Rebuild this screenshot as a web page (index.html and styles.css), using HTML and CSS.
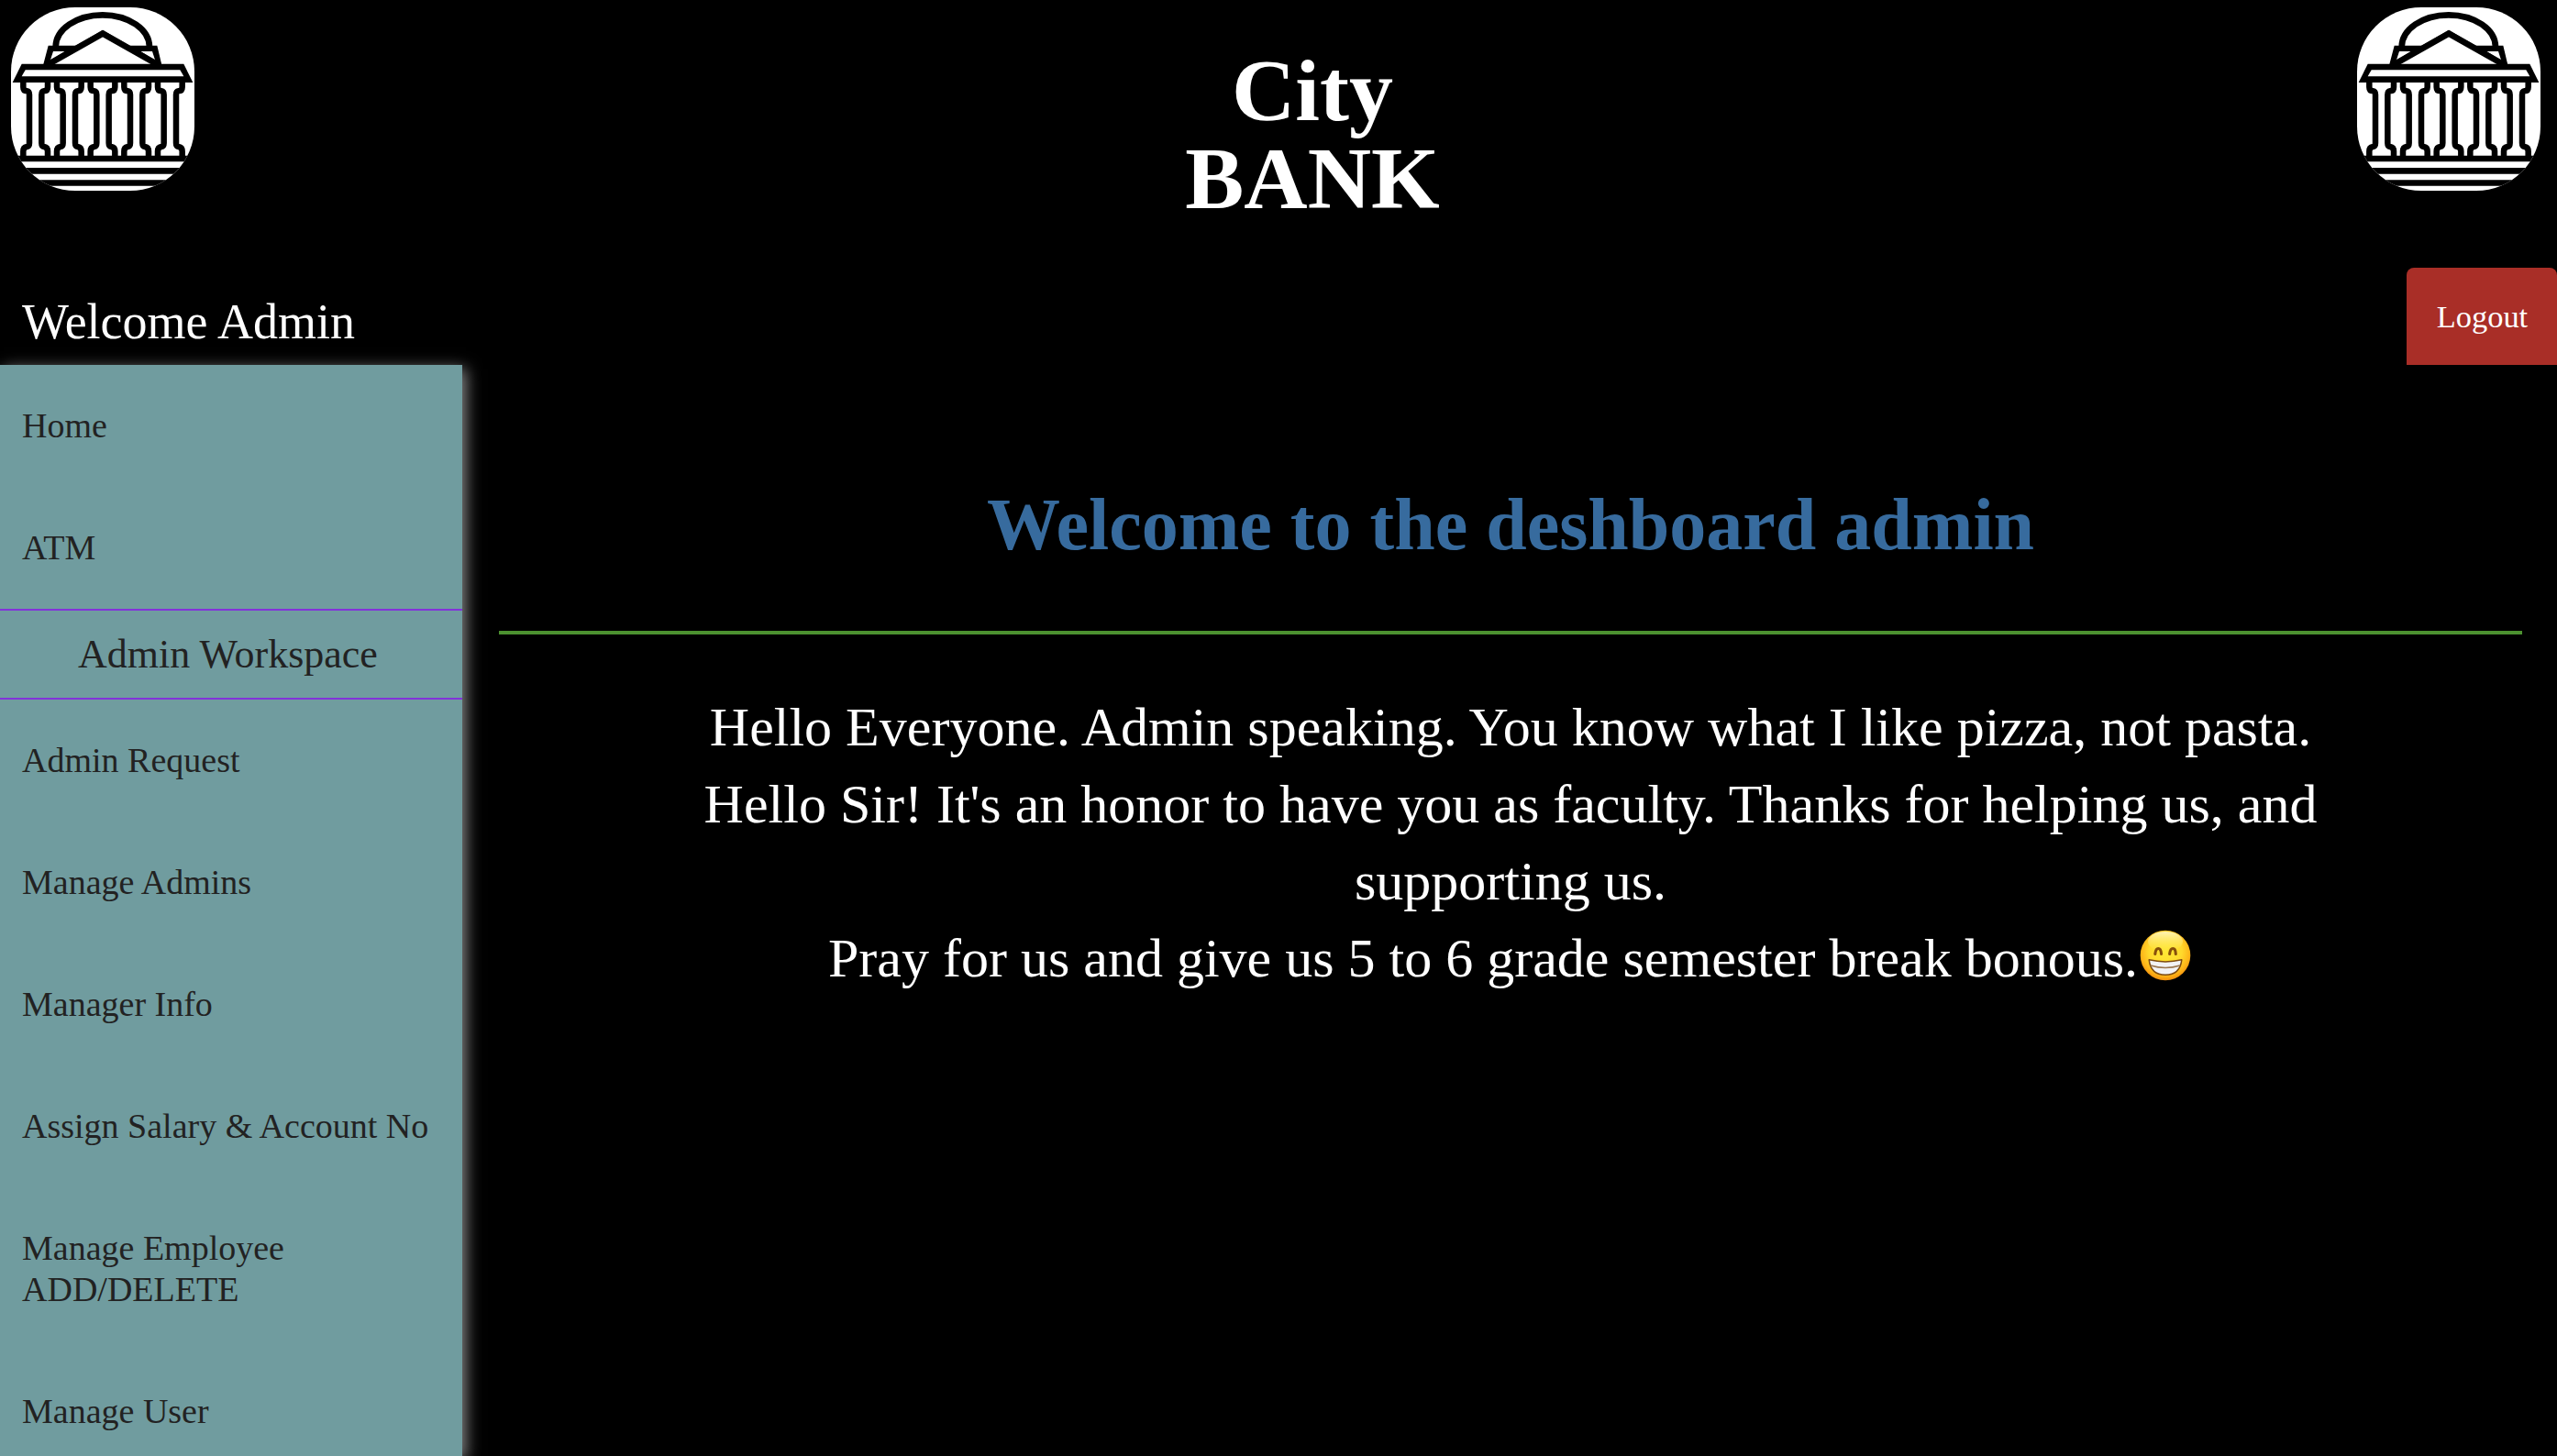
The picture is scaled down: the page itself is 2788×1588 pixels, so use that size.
FILE: index.html
```html
<!DOCTYPE html>
<html lang="en">
<head>
<meta charset="utf-8">
<title>City Bank</title>
<link rel="stylesheet" href="styles.css">
</head>
<body>
<svg class="defs" aria-hidden="true">
  <defs>
    <g id="column" fill="none" stroke="#000" stroke-width="19.5">
      <path d="M-40 262V285Q-40 298 -28 298Q-20 299 -20 310V468Q-20 479 -28 480Q-40 482 -40 495V515"/>
      <path d="M40 262V285Q40 298 28 298Q20 299 20 310V468Q20 479 28 480Q40 482 40 495V515"/>
    </g>
    <symbol id="bank" viewBox="36 24 600 600">
      <rect x="36" y="24" width="600" height="600" fill="#fff"/>
      <path d="M182 154A153.500 105 0 0 1 489 154" fill="none" stroke="#000" stroke-width="20"/>
      <path fill-rule="evenodd" d="M158 149H514L532 225H138ZM174 168L164 199L212 168ZM498 168L508 199L460 168ZM248 149L336 98L424 149Z"/>
      <path d="M248 150L336 100L424 150Z" fill="#fff"/>
      <path d="M150 215L336 110L522 215" fill="#fff" stroke="#000" stroke-width="20"/>
      <path d="M41 270L71 209H601L631 270Z"/>
      <path d="M71 250L83 229H589L601 250Z" fill="#fff"/>
      <use href="#column" x="116"/><use href="#column" x="226"/><use href="#column" x="336"/><use href="#column" x="446"/><use href="#column" x="556"/>
      <path d="M36 509.500H636V529H36ZM36 549H636V569H36ZM36 589H636V608H36Z"/>
    </symbol>
  </defs>
</svg>
<header class="header">
  <svg class="logo"><use href="#bank"/></svg>
  <h1 class="brand">City<br>BANK</h1>
  <svg class="logo"><use href="#bank"/></svg>
</header>
<div class="topbar">
  <span class="greeting">Welcome Admin</span>
  <a class="logout">Logout</a>
</div>
<div class="layout">
  <nav class="sidebar">
    <a class="item">Home</a>
    <a class="item">ATM</a>
    <div class="section">Admin Workspace</div>
    <a class="item">Admin Request</a>
    <a class="item">Manage Admins</a>
    <a class="item">Manager Info</a>
    <a class="item">Assign Salary &amp; Account No</a>
    <a class="item">Manage Employee ADD/DELETE</a>
    <a class="item last">Manage User</a>
  </nav>
  <main class="content">
    <h2 class="title">Welcome to the deshboard admin</h2>
    <p class="message">Hello Everyone. Admin speaking. You know what I like pizza, not pasta.<br>Hello Sir! It's an honor to have you as faculty. Thanks for helping us, and<br>supporting us.<br>Pray for us and give us 5 to 6 grade semester break bonous.<svg class="emoji" viewBox="0 0 60 60" role="img" aria-label="Grinning face">
      <defs>
        <radialGradient id="face" cx=".5" cy=".42" r=".6">
          <stop offset="0" stop-color="#ffe835"/><stop offset=".55" stop-color="#ffd92c"/><stop offset=".82" stop-color="#fdb318"/><stop offset="1" stop-color="#ee8509"/>
        </radialGradient>
        <linearGradient id="shine" x1="0" y1="0" x2="0" y2="1">
          <stop offset="0" stop-color="#fffbd0" stop-opacity=".85"/><stop offset="1" stop-color="#fff06a" stop-opacity="0"/>
        </linearGradient>
      </defs>
      <circle cx="30" cy="30" r="27.300" fill="url(#face)"/>
      <ellipse cx="30" cy="15" rx="19" ry="11" fill="url(#shine)"/>
      <path d="M18.800 28.500Q19.500 22.500 22.300 22.500T25.600 28.500M34.600 28.500Q35.300 22.500 38.200 22.500T41.300 28.500" fill="none" stroke="#87500b" stroke-width="3.100" stroke-linecap="round"/>
      <path d="M12.200 34.800Q30 39 47.800 34.800Q46 51.200 30 51.200Q14 51.200 12.200 34.800Z" fill="#f2f2f5" stroke="#7d4a10" stroke-width="1.500" stroke-linejoin="round"/>
      <path d="M14 41Q30 46 46 41" fill="none" stroke="#9a7650" stroke-width="1.600"/>
    </svg></p>
  </main>
</div>
</body>
</html>
```
FILE: styles.css
```css
* { box-sizing: border-box; }

body {
  margin: 0;
  height: 1588px;
  overflow: hidden;
  display: flex;
  flex-direction: column;
  background: #000;
  color: #fff;
  font-family: "Liberation Serif", "Times New Roman", serif;
}

.defs { position: absolute; width: 0; height: 0; }

.header {
  display: grid;
  grid-template-columns: 200px 1fr 200px;
  height: 292px;
  flex: none;
  padding: 8px 18px 0 12px;
}

.logo {
  width: 200px;
  height: 200px;
  border-radius: 35%;
}

.brand {
  margin: 43px 0 0 80px;
  font-size: 96px;
  line-height: 96px;
  text-align: center;
}

.topbar {
  display: flex;
  justify-content: space-between;
  height: 106px;
  flex: none;
}

.greeting {
  padding: 29px 0 0 24px;
  font-size: 54px;
  line-height: 60px;
}

.logout {
  width: 164px;
  padding-left: 1px;
  border-radius: 8px 8px 0 0;
  background: #a92e27;
  font-size: 34.400px;
  line-height: 107px;
  text-align: center;
}

.layout {
  display: flex;
  flex: 1;
  min-height: 0;
}

.sidebar {
  width: 504px;
  flex: none;
  background: #709c9f;
  color: #222;
  box-shadow: 4px 4px 16px #888;
}

.item {
  display: block;
  padding: 44px 24px;
  font-size: 38px;
  line-height: 45px;
}

.last { padding-bottom: 0; }

.section {
  height: 99px;
  padding-right: 7px;
  border: solid #8233d9;
  border-width: 2px 0;
  font-size: 44px;
  line-height: 96px;
  text-align: center;
}

.content {
  flex: 1;
  padding: 131px 38px 0 40px;
}

.title {
  height: 163px;
  margin: 0 0 59px;
  border-bottom: 4px solid #4c9130;
  color: #376b9e;
  font-size: 80px;
  line-height: 87px;
  text-align: center;
}

.message {
  margin: 0;
  font-size: 60px;
  line-height: 84px;
  text-align: center;
  white-space: nowrap;
}

.emoji {
  width: 60px;
  height: 60px;
  vertical-align: -7px;
}
```
